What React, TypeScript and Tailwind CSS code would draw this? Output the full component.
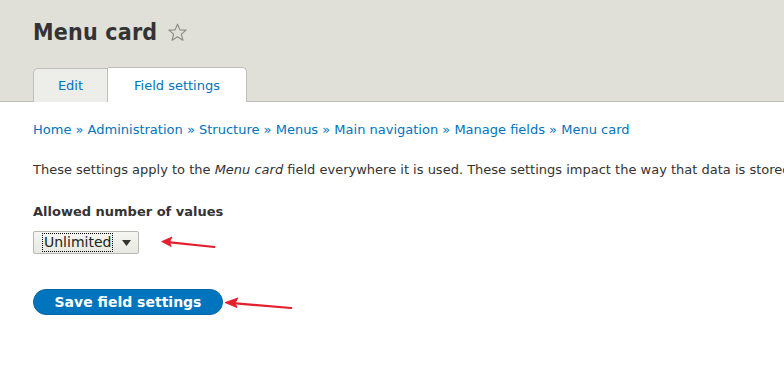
import React from 'react';

const crumbs = ['Home', 'Administration', 'Structure', 'Menus', 'Main navigation', 'Manage fields', 'Menu card'];

function Arrow({ className }: { className: string }) {
    return (
        <svg className={className} viewBox="0 0 70 20" fill="none" preserveAspectRatio="none">
            <path d="M68 15 L10 9" stroke="#e41f2d" strokeWidth="2.8" strokeLinecap="round" />
            <path d="M2 8.2 L15 2.5 L12 8.6 L14 14.5 Z" fill="#e41f2d" stroke="#e41f2d" strokeWidth="1" strokeLinejoin="round" />
        </svg>
    );
}

export default function App() {
    return (
        <div className="w-[784px] h-[386px] overflow-hidden bg-white text-[#333] font-['DejaVu_Sans',sans-serif]">
            <div className="bg-[#e0e0d8] border-b border-[#bfbfba] px-[33px] pt-[17px]">
                <div className="flex items-center gap-[10px] h-[30px]">
                    <h1 className="text-[23px] font-bold text-[#333] leading-none font-['DejaVu_Sans_Condensed','DejaVu_Sans',sans-serif] tracking-[0.2px]">Menu card</h1>
                    <svg className="w-[21px] h-[21px]" viewBox="0 0 24 24" fill="none" stroke="#8a8a84" strokeWidth="1.3" strokeLinejoin="round">
                        <path d="M12 2.5 L14.8 9 L21.8 9.3 L16.4 13.8 L18.2 20.8 L12 16.9 L5.8 20.8 L7.6 13.8 L2.2 9.3 L9.2 9 Z" />
                    </svg>
                </div>
                <div className="flex items-end mt-[20px] -mb-px">
                    <div className="w-[75px] h-[34px] flex items-center justify-center bg-[#ededea] border border-b-0 border-[#bfbfba] rounded-tl-[5px] text-[13px] text-[#0074bd]">Edit</div>
                    <div className="w-[139px] h-[35px] flex items-center justify-center bg-white border border-b-0 border-l-0 border-[#bfbfba] rounded-tr-[5px] text-[13px] text-[#0074bd] pt-px">Field settings</div>
                </div>
            </div>
            <div className="px-[33px] pt-[20px] text-[13px]">
                <nav className="text-[#0074bd] whitespace-nowrap leading-[16px]">
                    {crumbs.map((c, i) => (
                        <span key={c}>{i > 0 && <span> » </span>}{c}</span>
                    ))}
                </nav>
                <p className="mt-[24px] whitespace-nowrap leading-[16px]">
                    These settings apply to the <em>Menu card</em> field everywhere it is used. These settings impact the way that data is stored in the database and cannot be changed once data has been created.
                </p>
                <div className="mt-[26px] font-bold leading-[16px]">Allowed number of values</div>
                <div className="flex items-center mt-[11px]">
                    <div className="w-[106px] h-[23px] flex items-center bg-gradient-to-b from-[#f6f6f2] to-[#e8e8e2] border border-[#b8b8b2] rounded-[2px] pl-[8px] pr-[7px]">
                        <span className="text-[14px] text-[#222] border border-dotted border-black px-px leading-[17px]">Unlimited</span>
                        <svg className="ml-auto w-[9px] h-[6px]" viewBox="0 0 9 6"><path d="M0 0 H9 L4.5 6 Z" fill="#333" /></svg>
                    </div>
                    <Arrow className="w-[56px] h-[16px] ml-[21px] mt-[1px]" />
                </div>
                <div className="flex items-center mt-[35px]">
                    <button className="w-[190px] h-[26px] rounded-full bg-[#0074bd] border border-[#0064a6] text-white font-bold text-[14px] leading-none">Save field settings</button>
                    <Arrow className="w-[70px] h-[16px] ml-[0px] mt-[3px]" />
                </div>
            </div>
        </div>
    );
}
